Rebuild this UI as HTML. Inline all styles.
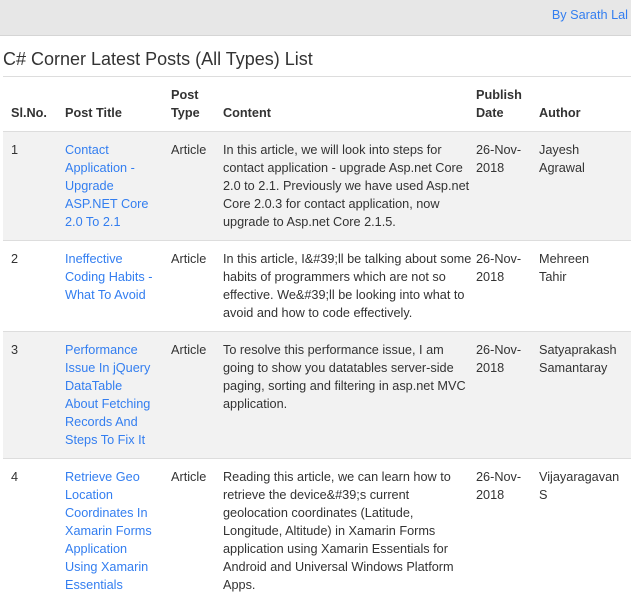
<!DOCTYPE html>
<html><head><style>
body{margin:0;font-family:"Liberation Sans",Arial,sans-serif;font-size:12.7px;color:#333;background:#fff;width:631px;height:577px;overflow:hidden}
.hdr{height:35px;background:#e7e7e7;border-bottom:1px solid #d5d5d5;position:relative}
.hdr a{position:absolute;right:3px;top:8px;color:#337ef0;font-size:12.7px;text-decoration:none}
h1{font-weight:normal;font-size:18px;margin:0;position:absolute;left:3px;top:49px;color:#333}
.line{position:absolute;left:3px;right:0;top:76px;border-top:1px solid #ddd}
table{position:absolute;left:3px;top:77px;border-collapse:collapse;width:640px;table-layout:fixed;line-height:18px}
th{text-align:left;vertical-align:bottom;padding:9px 8px 9px;font-weight:bold;border-bottom:1px solid #ddd}
td{vertical-align:top;padding:9px 8px 9px;border-top:1px solid #ddd;white-space:nowrap}
tr.s td{background:#f2f2f2}
a{color:#337ef0;text-decoration:none}
</style></head><body>
<div class="hdr"><a>By Sarath Lal</a></div>
<h1>C# Corner Latest Posts (All Types) List</h1>
<div class="line"></div>
<table>
<colgroup><col style="width:54px"><col style="width:106px"><col style="width:52px"><col style="width:253px"><col style="width:63px"><col style="width:112px"></colgroup>
<tr><th>Sl.No.</th><th>Post Title</th><th>Post<br>Type</th><th>Content</th><th>Publish<br>Date</th><th>Author</th></tr>
<tr class="s"><td>1</td><td><a>Contact<br>Application -<br>Upgrade<br>ASP.NET Core<br>2.0 To 2.1</a></td><td>Article</td><td>In this article, we will look into steps for<br>contact application - upgrade Asp.net Core<br>2.0 to 2.1. Previously we have used Asp.net<br>Core 2.0.3 for contact application, now<br>upgrade to Asp.net Core 2.1.5.</td><td>26-Nov-<br>2018</td><td>Jayesh<br>Agrawal</td></tr>
<tr><td>2</td><td><a>Ineffective<br>Coding Habits -<br>What To Avoid</a></td><td>Article</td><td>In this article, I&amp;#39;ll be talking about some<br>habits of programmers which are not so<br>effective. We&amp;#39;ll be looking into what to<br>avoid and how to code effectively.</td><td>26-Nov-<br>2018</td><td>Mehreen<br>Tahir</td></tr>
<tr class="s"><td>3</td><td><a>Performance<br>Issue In jQuery<br>DataTable<br>About Fetching<br>Records And<br>Steps To Fix It</a></td><td>Article</td><td>To resolve this performance issue, I am<br>going to show you datatables server-side<br>paging, sorting and filtering in asp.net MVC<br>application.</td><td>26-Nov-<br>2018</td><td>Satyaprakash<br>Samantaray</td></tr>
<tr><td>4</td><td><a>Retrieve Geo<br>Location<br>Coordinates In<br>Xamarin Forms<br>Application<br>Using Xamarin<br>Essentials</a></td><td>Article</td><td>Reading this article, we can learn how to<br>retrieve the device&amp;#39;s current<br>geolocation coordinates (Latitude,<br>Longitude, Altitude) in Xamarin Forms<br>application using Xamarin Essentials for<br>Android and Universal Windows Platform<br>Apps.</td><td>26-Nov-<br>2018</td><td>Vijayaragavan<br>S</td></tr>
</table>
</body></html>
